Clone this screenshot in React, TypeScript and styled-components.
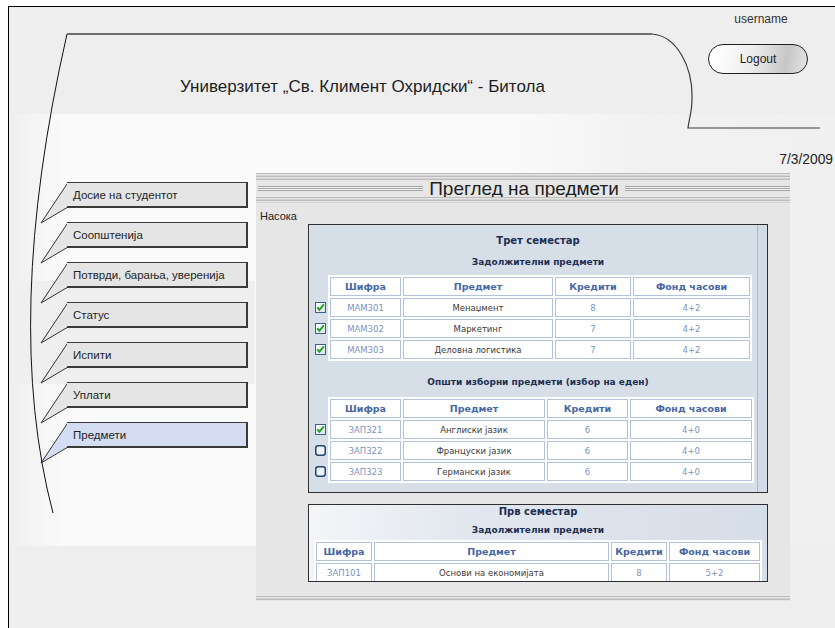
import React from "react";
import styled, { createGlobalStyle } from "styled-components";

const GlobalStyle = createGlobalStyle`
  html, body {
    margin: 0;
    padding: 0;
    background: #ffffff;
    overflow: hidden;
  }
  body {
    font-family: "Liberation Sans", Arial, sans-serif;
    color: #222;
  }
`;

/* ---------- page frame ---------- */

const Frame = styled.div`
  position: relative;
  margin: 6px 0 0 8px;
  width: 830px;
  height: 640px;
  border: 1px solid #000;
  background:
    linear-gradient(#efefef, #efefef) 0 274px / 246px 103px no-repeat,
    linear-gradient(90deg, #efefef 0, #fafafa 55px, #fafafa 500px, #f1f1f1 640px, #f0f0f0 100%) 0 107px / 100% 432px no-repeat,
    #eeeeee;
`;

const Decor = styled.svg`
  position: absolute;
  left: 0;
  top: 0;
  width: 830px;
  height: 640px;
  pointer-events: none;
  z-index: 2;
`;

/* ---------- header ---------- */

const Header = styled.header`
  display: flex;
  height: 107px;
`;

const SiteTitle = styled.h1`
  margin: 0;
  padding: 70px 0 0 171px;
  font: 400 17px/20px "Liberation Sans", Arial, sans-serif;
  color: #1e1e1e;
  white-space: nowrap;
`;

const UserBox = styled.div`
  margin-left: auto;
  margin-right: 31px;
  width: 100px;
  padding-top: 5px;
  display: flex;
  flex-direction: column;
  align-items: center;
  gap: 18px;
`;

const Username = styled.span`
  font: 400 12px/14px "Liberation Sans", Arial, sans-serif;
  color: #333;
  padding-left: 6px;
`;

const LogoutButton = styled.button`
  width: 100px;
  height: 30px;
  border: 1px solid #1f1f1f;
  border-radius: 15px;
  background: linear-gradient(100deg, #ffffff 8%, #ececec 45%, #c6c6c6 78%, #e6e6e6 100%);
  font: 400 12px/14px "Liberation Sans", Arial, sans-serif;
  color: #222;
  padding: 0;
  cursor: pointer;
`;

/* ---------- content ---------- */

const Content = styled.div`
  display: flex;
  flex-direction: column;
`;

const DateRow = styled.div`
  height: 59px;
  box-sizing: border-box;
  display: flex;
  align-items: flex-end;
  justify-content: flex-end;
  padding: 0 6px 5px 0;
  font: 400 13.8px/16px "Liberation Sans", Arial, sans-serif;
  color: #222;
`;

const MainRow = styled.div`
  display: grid;
  grid-template-columns: 247px 534px;
  align-items: start;
`;

/* ---------- side navigation ---------- */

const NavList = styled.nav`
  display: flex;
  flex-direction: column;
  gap: 14px;
  padding: 9px 0 0 31px;
`;

const NavItem = styled.a`
  display: flex;
  align-items: flex-start;
  text-decoration: none;
  cursor: pointer;
`;

const Tail = styled.svg`
  flex: none;
  display: block;
  width: 28px;
  height: 26px;
  overflow: visible;
  margin-right: -1px;
`;

const NavBox = styled.span<{ $active?: boolean }>`
  box-sizing: border-box;
  width: 181px;
  height: 26px;
  border: 1px solid #3a3a3a;
  border-left: none;
  border-right-width: 2px;
  border-bottom-width: 2px;
  background: ${(p) => (p.$active ? "#d5ddf3" : "#e5e5e5")};
  padding: 5px 0 0 6px;
  font: 400 11.5px/14px "Liberation Sans", Arial, sans-serif;
  color: #1e1e1e;
  white-space: nowrap;
`;

/* ---------- main panel ---------- */

const Panel = styled.section`
  height: 428px;
  background: #e6e6e6;
  display: flex;
  flex-direction: column;
`;

const Rule = styled.div<{ $h: number }>`
  height: ${(p) => p.$h}px;
  background: repeating-linear-gradient(180deg, #bcbcbc 0 1px, #e4e4e4 1px 2px, #d2d2d2 2px 3px);
`;

const TitleRow = styled.div`
  height: 17px;
  display: flex;
  align-items: center;
  gap: 6px;
  padding: 0 0 0 2px;
`;

const TitleLine = styled.span`
  flex: 1;
  height: 5px;
  background: repeating-linear-gradient(180deg, #a4a4a4 0 1px, #f4f4f4 1px 2px);
`;

const PanelTitle = styled.h2`
  margin: 0;
  font: 400 19px/17px "Liberation Sans", Arial, sans-serif;
  color: #1e1e1e;
`;

const FieldLabel = styled.div`
  height: 21px;
  box-sizing: border-box;
  padding: 7px 0 0 4px;
  font: 400 11px/13px "Liberation Sans", Arial, sans-serif;
  color: #222;
`;

const Card = styled.div<{ $soft?: boolean; $h: number; $mt?: number }>`
  position: relative;
  box-sizing: border-box;
  margin: ${(p) => p.$mt ?? 0}px 0 0 52px;
  width: 460px;
  height: ${(p) => p.$h}px;
  border: 1px solid #2e2e2e;
  overflow: hidden;
  display: flex;
  flex-direction: column;
  background: ${(p) =>
    p.$soft
      ? "linear-gradient(100deg, #f4f6f8 0%, #e1e7ee 35%, #d5dde8 100%)"
      : "#d6dee8"};
`;

const CardBody = styled.div<{ $pad: string }>`
  display: flex;
  flex-direction: column;
  padding: ${(p) => p.$pad};
`;

/* the card's own scroll bar, sitting over its right edge */
const ScrollTrack = styled.div`
  position: absolute;
  top: 0;
  right: 0;
  bottom: 0;
  width: 9px;
  border-left: 1px solid #aab7ca;
  background: #d3dbe6;
`;

const SemesterTitle = styled.div`
  font: 700 10px/14px "DejaVu Sans", Verdana, sans-serif;
  color: #1c2e52;
  text-align: center;
`;

const GroupTitle = styled.div<{ $mt: number; $mb: number }>`
  margin: ${(p) => p.$mt}px 0 ${(p) => p.$mb}px;
  font: 700 9px/14px "DejaVu Sans", Verdana, sans-serif;
  color: #1c2e52;
  text-align: center;
`;

const TableRow = styled.div<{ $indent: number }>`
  display: flex;
  padding-left: ${(p) => p.$indent}px;
`;

const CheckColumn = styled.div`
  width: 19px;
  flex: none;
  display: flex;
  flex-direction: column;
  gap: 2px;
  padding-top: 23px;
`;

const CheckSlot = styled.div`
  height: 19px;
  display: flex;
  align-items: center;
  padding-left: 6px;
`;

const Grid = styled.div<{ $cols: string }>`
  display: grid;
  grid-template-columns: ${(p) => p.$cols};
  grid-auto-rows: 19px;
  gap: 2px;
  padding: 2px;
  background: #ffffff;
  align-self: flex-start;
`;

type Tone = "head" | "code" | "name" | "num";

const toneColor: Record<Tone, string> = {
  head: "#4767a3",
  code: "#7b93bd",
  name: "#3a3a3a",
  num: "#7b93bd",
};

const Cell = styled.div<{ $tone: Tone }>`
  box-sizing: border-box;
  border: 1px solid #b1c2da;
  display: flex;
  align-items: center;
  justify-content: center;
  white-space: nowrap;
  font: ${(p) => (p.$tone === "head" ? 700 : 400)} ${(p) => (p.$tone === "head" ? "9.5px" : "8.5px")} / 12px "DejaVu Sans", Verdana, sans-serif;
  color: ${(p) => toneColor[p.$tone]};
`;

const CheckMark = ({ checked }: { checked: boolean }) =>
  checked ? (
    <svg width="11" height="11" viewBox="0 0 11 11">
      <defs>
        <linearGradient id="cbfill" x1="0" y1="0" x2="1" y2="1">
          <stop offset="0" stopColor="#ffffff" />
          <stop offset="1" stopColor="#d9e1ec" />
        </linearGradient>
      </defs>
      <rect x="0.5" y="0.5" width="10" height="10" fill="url(#cbfill)" stroke="#3d5f8c" />
      <path d="M2.2 5.4 L4.4 7.8 L8.8 2.4" fill="none" stroke="#1fa51f" strokeWidth="2" />
    </svg>
  ) : (
    <svg width="11" height="11" viewBox="0 0 11 11">
      <rect x="0.75" y="0.75" width="9.5" height="9.5" rx="2.5" fill="#eef3f8" stroke="#23466f" strokeWidth="1.5" />
    </svg>
  );

type Course = { code: string; name: string; credits: string; hours: string; checked?: boolean };

const header = ["Шифра", "Предмет", "Кредити", "Фонд часови"];

const CourseTable = ({
  cols,
  rows,
  withChecks,
}: {
  cols: string;
  rows: Course[];
  withChecks: boolean;
}) => (
  <>
    {withChecks && (
      <CheckColumn>
        {rows.map((r) => (
          <CheckSlot key={r.code}>
            <CheckMark checked={!!r.checked} />
          </CheckSlot>
        ))}
      </CheckColumn>
    )}
    <Grid $cols={cols}>
      {header.map((h) => (
        <Cell key={h} $tone="head">
          {h}
        </Cell>
      ))}
      {rows.map((r) => (
        <React.Fragment key={r.code}>
          <Cell $tone="code">{r.code}</Cell>
          <Cell $tone="name">{r.name}</Cell>
          <Cell $tone="num">{r.credits}</Cell>
          <Cell $tone="num">{r.hours}</Cell>
        </React.Fragment>
      ))}
    </Grid>
  </>
);

const required3: Course[] = [
  { code: "MAM301", name: "Менаџмент", credits: "8", hours: "4+2", checked: true },
  { code: "MAM302", name: "Маркетинг", credits: "7", hours: "4+2", checked: true },
  { code: "MAM303", name: "Деловна логистика", credits: "7", hours: "4+2", checked: true },
];

const electives3: Course[] = [
  { code: "ЗАП321", name: "Англиски јазик", credits: "6", hours: "4+0", checked: true },
  { code: "ЗАП322", name: "Француски јазик", credits: "6", hours: "4+0" },
  { code: "ЗАП323", name: "Германски јазик", credits: "6", hours: "4+0" },
];

const required1: Course[] = [
  { code: "ЗАП101", name: "Основи на економијата", credits: "8", hours: "5+2" },
];

const navItems = [
  "Досие на студентот",
  "Соопштенија",
  "Потврди, барања, уверенија",
  "Статус",
  "Испити",
  "Уплати",
  "Предмети",
];

export default function App() {
  return (
    <>
      <GlobalStyle />
      <Frame>
        <Decor viewBox="0 0 830 640">
          {/* sweeping arc along the left edge */}
          <path d="M58 27 Q -7 313 44 506" fill="none" stroke="#111" strokeWidth="1" />
          {/* header outline with the rounded drop on the right */}
          <path d="M58 27 L643 27" fill="none" stroke="#6e6e6e" strokeWidth="2" />
          <path
            d="M643 27 C 668 29, 684 60, 683 92 C 683 105, 680 112, 679 121 L 811 121"
            fill="none"
            stroke="#3c3c3c"
            strokeWidth="1.2"
          />
        </Decor>

        <Header>
          <SiteTitle>Универзитет „Св. Климент Охридски“ - Битола</SiteTitle>
          <UserBox>
            <Username>username</Username>
            <LogoutButton>Logout</LogoutButton>
          </UserBox>
        </Header>

        <Content>
          <DateRow>7/3/2009</DateRow>
          <MainRow>
            <NavList>
              {navItems.map((label) => {
                const active = label === "Предмети";
                const fill = active ? "#d5ddf3" : "#e5e5e5";
                return (
                  <NavItem key={label}>
                    <Tail viewBox="0 0 28 26">
                      <path d="M28 0.5 L1 41 L28 25 Z" fill={fill} />
                      <path d="M28 0.5 L1 41 L28 25" fill="none" stroke="#333" strokeWidth="1" />
                    </Tail>
                    <NavBox $active={active}>{label}</NavBox>
                  </NavItem>
                );
              })}
            </NavList>

            <Panel>
              <Rule $h={7} />
              <TitleRow>
                <TitleLine />
                <PanelTitle>Преглед на предмети</PanelTitle>
                <TitleLine />
              </TitleRow>
              <Rule $h={6} />
              <FieldLabel>Насока</FieldLabel>

              <Card $h={269}>
                <ScrollTrack />
                <CardBody $pad="9px 0 0 0">
                  <SemesterTitle>Трет семестар</SemesterTitle>
                  <GroupTitle $mt={7} $mb={6}>
                    Задолжителни предмети
                  </GroupTitle>
                  <TableRow $indent={0}>
                    <CourseTable cols="71px 150px 76px 117px" rows={required3} withChecks />
                  </TableRow>
                  <GroupTitle $mt={14} $mb={8}>
                    Општи изборни предмети (избор на еден)
                  </GroupTitle>
                  <TableRow $indent={0}>
                    <CourseTable cols="71px 142px 81px 122px" rows={electives3} withChecks />
                  </TableRow>
                </CardBody>
              </Card>

              <Card $h={78} $soft $mt={11}>
                <CardBody $pad="0 0 0 0">
                  <SemesterTitle>Прв семестар</SemesterTitle>
                  <GroupTitle $mt={4} $mb={3}>
                    Задолжителни предмети
                  </GroupTitle>
                  <TableRow $indent={5}>
                    <CourseTable cols="56px 235px 56px 91px" rows={required1} withChecks={false} />
                  </TableRow>
                </CardBody>
              </Card>

              <Rule $h={5} style={{ marginTop: "auto" }} />
            </Panel>
          </MainRow>
        </Content>
      </Frame>
    </>
  );
}
